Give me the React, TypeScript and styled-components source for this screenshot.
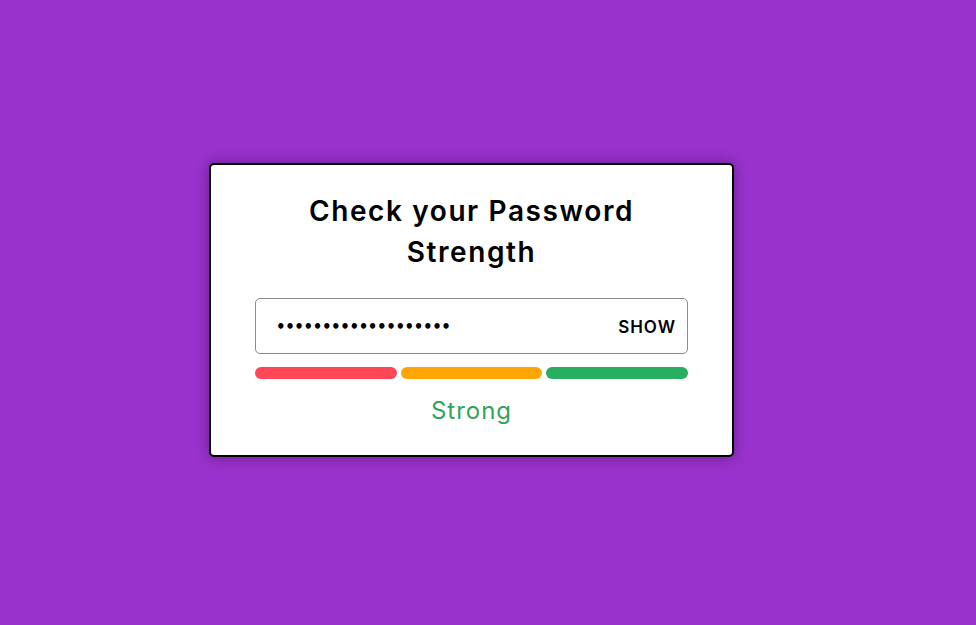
import React, { useState } from "react";
import styled, { createGlobalStyle } from "styled-components";

const Global = createGlobalStyle`
  html, body { margin: 0; padding: 0; }
  body { background: #9932cc; font-family: "Open Sans", "Inter", sans-serif; }
  * { box-sizing: border-box; }
`;

const Page = styled.div`
  width: 976px;
  height: 625px;
  display: flex;
  align-items: center;
  justify-content: center;
  padding-right: 33px;
  padding-bottom: 5px;
`;

const Card = styled.div`
  width: 525px;
  height: 294px;
  background: #fff;
  border: 2px solid #000;
  border-radius: 5px;
  box-shadow: 0 0 14px rgba(40, 0, 60, 0.45);
  padding: 26px 44px 0 44px;
  display: flex;
  flex-direction: column;
`;

const Title = styled.h1`
  margin: 0 auto;
  width: 400px;
  text-align: center;
  font-family: "Inter", "Open Sans", sans-serif;
  font-weight: 600;
  font-size: 28px;
  line-height: 41px;
  color: #000;
  letter-spacing: 1.6px;
`;

const Field = styled.div`
  margin-top: 25px;
  height: 56px;
  border: 1px solid #8a8a8a;
  border-radius: 5px;
  display: flex;
  align-items: center;
  padding: 2px 11px 0 20px;
`;

const Input = styled.input`
  flex: 1;
  border: none;
  outline: none;
  font-family: "DejaVu Sans", sans-serif;
  font-weight: 700;
  font-size: 15px;
  letter-spacing: -0.4px;
  color: #000;
  background: transparent;
  padding: 0;
`;

const Toggle = styled.button`
  border: none;
  background: none;
  padding: 0;
  font-family: "Inter", sans-serif;
  font-weight: 600;
  font-size: 17px;
  letter-spacing: 1px;
  color: #000;
  cursor: pointer;
`;

const Bars = styled.div`
  margin-top: 13px;
  display: grid;
  grid-template-columns: repeat(3, 1fr);
  gap: 4px;
`;

const Bar = styled.div<{ $color: string }>`
  height: 12px;
  border-radius: 6px;
  background: ${(p) => p.$color};
`;

const Label = styled.div`
  margin-top: 17px;
  text-align: center;
  font-family: "Inter", sans-serif;
  font-size: 24px;
  font-weight: 400;
  letter-spacing: 1px;
  color: #2ea55b;
`;

export default function App() {
  const [show, setShow] = useState(false);
  return (
    <>
      <Global />
      <Page>
        <Card>
          <Title>Check your Password Strength</Title>
          <Field>
            <Input
              type={show ? "text" : "password"}
              defaultValue="Str0ngP@ssword!2024"
            />
            <Toggle onClick={() => setShow(!show)}>{show ? "HIDE" : "SHOW"}</Toggle>
          </Field>
          <Bars>
            <Bar $color="#ff4757" />
            <Bar $color="#ffa502" />
            <Bar $color="#27ae60" />
          </Bars>
          <Label>Strong</Label>
        </Card>
      </Page>
    </>
  );
}
